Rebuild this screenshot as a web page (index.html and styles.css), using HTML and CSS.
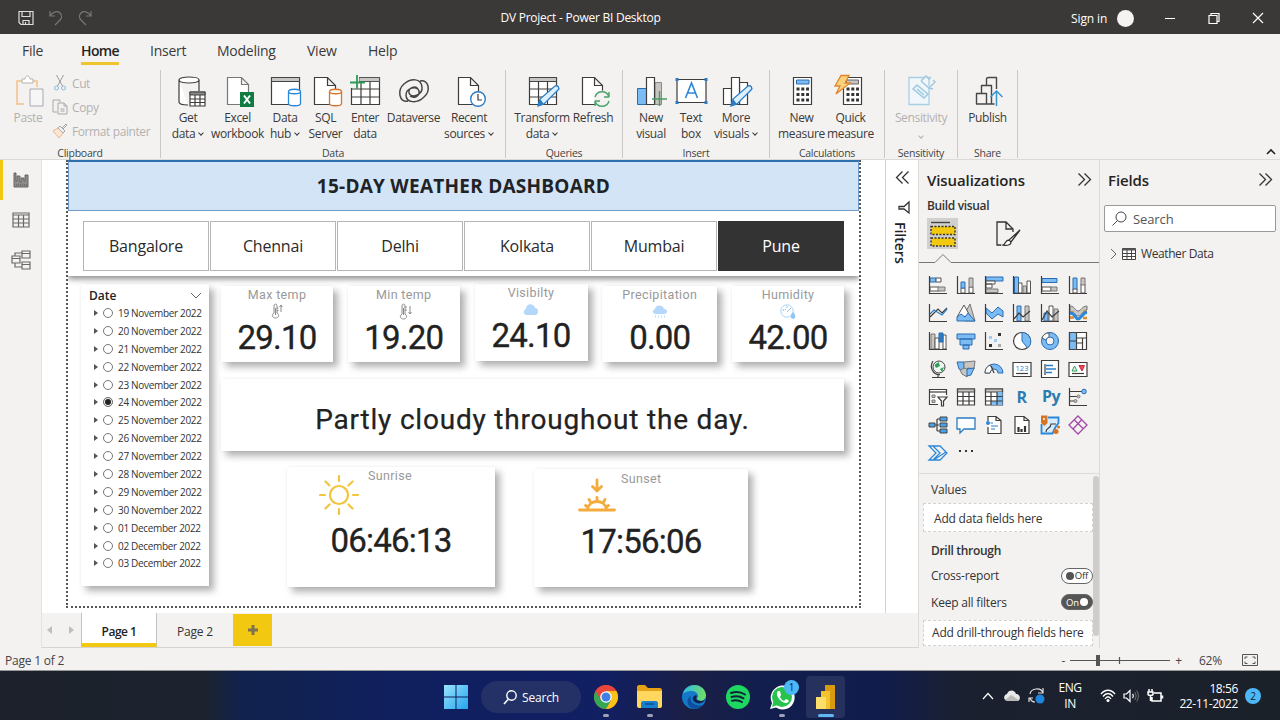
FILE: index.html
```html
<!DOCTYPE html>
<html lang="en">
<head>
<meta charset="utf-8">
<title>DV Project - Power BI Desktop</title>
<link rel="stylesheet" href="styles.css">
</head>
<body>
<header class="titlebar">
  <div class="quick">
    <svg width="16" height="16" viewBox="0 0 16 16" class="ln light"><path d="M1 1.500h14v13H3l-2-2zM4 1.500v5h8v-5M5 14.500v-4h6v4M7.500 12v2"/></svg>
    <svg width="14" height="16" viewBox="0 0 14 16" class="ln dim"><path d="M1 1v5h5M1 6c3-5 8-5 10-3s2 5 0 7l-5 5"/></svg>
    <svg width="14" height="16" viewBox="0 0 14 16" class="ln dim"><path d="M13 1v5H8M13 6C10 1 5 1 3 3s-2 5 0 7l5 5"/></svg>
  </div>
  <div class="wtitle">DV Project - Power BI Desktop</div>
  <div class="winctl">
    <span class="signin">Sign in</span><i class="avatar"></i>
    <svg width="12" height="12" viewBox="0 0 12 12" class="ln white c1"><path d="M1 6.500h10"/></svg>
    <svg width="12" height="12" viewBox="0 0 12 12" class="ln white c2"><path d="M1 3.500h8v8H1zM3 3.500V1.500h8v8H9" stroke-width="1.200"/></svg>
    <svg width="12" height="12" viewBox="0 0 12 12" class="ln white c3"><path d="M1 1l10 10M11 1L1 11" stroke-width="1.200"/></svg>
  </div>
</header>

<nav class="tabs">
  <span class="t-file">File</span><span class="t-home on">Home</span><span class="t-ins">Insert</span><span class="t-mod">Modeling</span><span class="t-view">View</span><span class="t-help">Help</span>
</nav>

<section class="ribbon">
  <div class="group g-clip">
    <div class="row">
      <div class="rb off b-paste"><svg viewBox="0 0 32 32" class="ic"><path d="M12 28H5V5h5M20 5h5v6" fill="none" stroke="#f3c08a" stroke-width="1.500"/><path d="M10 7V3h3c0-4 5-4 5 0h3v4z" fill="#fff" stroke="#b5b3b1"/><path d="M18 13h13v17H18z" fill="#f6f6f6" stroke="#a9a7b0"/></svg><span>Paste</span></div>
      <div class="mini off">
        <div><svg width="16" height="16" viewBox="0 0 16 16" class="ln"><path d="M4.500 0l6 11M11.500 0L5.500 11" stroke="#9b9b9b"/><circle cx="4.500" cy="13" r="2" stroke="#86bcd8"/><circle cx="11.500" cy="13" r="2" stroke="#86bcd8"/></svg><span>Cut</span></div>
        <div><svg width="16" height="16" viewBox="0 0 16 16" class="ln"><path d="M5 13H1V1h7v2M6 4h6l3 3v8H6zM12 4v3h3M8.500 10h4M8.500 12h4" stroke="#aaa8a6"/></svg><span>Copy</span></div>
        <div><svg width="16" height="16" viewBox="0 0 16 16" class="ln"><path d="M1 8l5-3 5 5-4 5z" stroke="#efb58a" fill="#fbe7d6"/><path d="M6 5l2-2 5 5-2 2zM10 5l4-4 1 1-4 4" stroke="#a8a6a4"/></svg><span>Format painter</span></div>
      </div>
    </div>
    <div class="gl">Clipboard</div>
  </div>
  <div class="group g-data">
    <div class="row">
      <div class="rb b46"><svg viewBox="0 0 32 32" class="ic"><path d="M7 4v22c0 2 3 3 9 3M27 4v11M7 4c0-4 20-4 20 0s-20 4-20 0" class="k w"/><path d="M18 16h15v14H18z" class="k w"/><path d="M18 16h15v3H18z" fill="#888" stroke="#444"/><path d="M18 23h15M18 26.500h15M23 19v11M28 19v11" class="k"/></svg><span>Get</span><span>data<b></b></span></div>
      <div class="rb b53"><svg viewBox="0 0 32 32" class="ic"><path d="M5.500 1.500h14l7 7V28.500h-21zM19.500 1.500v7h7" class="k w gy"/><path d="M18 16h14v15H18z" fill="#107c41"/><path d="M22 19.500l6 8M28 19.500l-6 8" stroke="#fff" stroke-width="2"/></svg><span>Excel</span><span>workbook</span></div>
      <div class="rb b42"><svg viewBox="0 0 32 32" class="ic"><path d="M2.500 1.500h28v27h-28z" class="k w"/><path d="M2.500 1.500h28v4h-28z" fill="#c8c6c4" stroke="#444"/><path d="M19.500 15.500v12c0 3 12 3 12 0v-12c0-3-12-3-12 0c0 3 12 3 12 0" fill="#fff" stroke="#2b88d8" stroke-width="1.300"/></svg><span>Data</span><span>hub<b></b></span></div>
      <div class="rb b39"><svg viewBox="0 0 32 32" class="ic"><path d="M4.500 1.500h13l8 8v19h-21zM17.500 1.500v8h8" class="k w"/><path d="M19.500 15.500v12c0 3 12 3 12 0v-12c0-3-12-3-12 0c0 3 12 3 12 0" fill="#fff" stroke="#d9742b" stroke-width="1.300"/></svg><span>SQL</span><span>Server</span></div>
      <div class="rb b40"><svg viewBox="0 0 32 32" class="ic"><path d="M2.500 1.500h28v27h-28z" class="k w"/><path d="M10 1.500h20.500v4H10z" fill="#c8c6c4" stroke="#555"/><path d="M2.500 13h28M2.500 21h28M12 5.500v23M21 5.500v23" class="k"/><path d="M0 0h10v12H0z" fill="#f3f2f1"/><path d="M1 6.500h15M8 -1v14" stroke="#2e9b57" stroke-width="1.800"/></svg><span>Enter</span><span>data</span></div>
      <div class="rb b57"><svg viewBox="0 0 32 32" class="ic"><path d="M10 25C1 27-1 14 6 8c7-6 17-6 18 3 1 8-11 12-13 6-1-5 6-8 9-4M22 5c9-2 11 10 4 16-7 7-18 6-18-2C8 12 19 9 21 15c1 5-5 8-9 5" fill="none" stroke="#484644" stroke-width="1.500"/></svg><span>Dataverse</span></div>
      <div class="rb b54"><svg viewBox="0 0 32 32" class="ic"><path d="M5.500 1.500h12l8 8v19h-20zM17.500 1.500v8h8" class="k w"/><circle cx="25" cy="23" r="7.300" fill="#fff" stroke="#2b7cc4" stroke-width="1.400"/><path d="M25 18v6h4" class="k"/></svg><span>Recent</span><span>sources<b></b></span></div>
    </div>
    <div class="gl">Data</div>
  </div>
  <div class="group g-q">
    <div class="row">
      <div class="rb b54"><svg viewBox="0 0 32 32" class="ic"><path d="M3.500 1.500h27v27h-27z" class="k w"/><path d="M3.500 1.500h27v4h-27z" fill="#c8c6c4" stroke="#444"/><path d="M3.500 13h27M3.500 21h27M12.500 5.500v23M21.500 5.500v23" class="k"/><path d="M12 30l2-7 15-13c3-1 5 2 3 4L18 28z" fill="#dcf0ff" stroke="#2b7cc4" stroke-width="1.300"/><path d="M12 30l2-7 4 5z" fill="#2b7cc4"/></svg><span>Transform</span><span>data<b></b></span></div>
      <div class="rb b48"><svg viewBox="0 0 32 32" class="ic"><path d="M5.500 1.500h12l8 8v19h-20zM17.500 1.500v8h8" class="k w"/><circle cx="25" cy="23" r="8.500" fill="#f3f2f1"/><path d="M18 21c2-7 12-7 14 0v-5M32 21h-5M32 25c-2 7-12 7-14 0v5M18 25h5" fill="none" stroke="#4ba36b" stroke-width="1.400"/></svg><span>Refresh</span></div>
    </div>
    <div class="gl">Queries</div>
  </div>
  <div class="group g-ins">
    <div class="row">
      <div class="rb b40"><svg viewBox="0 0 32 32" class="ic"><path d="M2.500 12.500h9v16h-9z" fill="#7cbcf5" stroke="#2b6cb0"/><path d="M20 6.500h6.500v22H20z" fill="#c8c6c4" stroke="#888"/><path d="M11.500 1.500h8v27h-8z" class="k w"/><path d="M17 23h15M24.500 15v15" stroke="#4b9a62" stroke-width="1.500"/></svg><span>New</span><span>visual</span></div>
      <div class="rb b40"><svg viewBox="0 0 32 32" class="ic"><path d="M2 3.500h29v23H2z" class="k w"/><path d="M10.500 22L16.500 7l6 15M12.500 17h8" fill="none" stroke="#2b88d8" stroke-width="1.600"/><path d="M.500 2h3v3h-3zM29.500 2h3v3h-3zM.500 25h3v3h-3zM29.500 25h3v3h-3z" fill="#2b7cc4"/></svg><span>Text</span><span>box</span></div>
      <div class="rb b50"><svg viewBox="0 0 32 32" class="ic"><path d="M3.500 12.500h8v16h-8zM19.500 6.500h8v22h-8z" class="k w"/><path d="M11.500 1.500h8v27h-8z" class="k w"/><path d="M11 30l2-7 15-13c3-1 5 2 3 4L17 28z" fill="#dcf0ff" stroke="#2b7cc4" stroke-width="1.300"/><path d="M11 30l2-7 4 5z" fill="#2b7cc4"/></svg><span>More</span><span>visuals<b></b></span></div>
    </div>
    <div class="gl">Insert</div>
  </div>
  <div class="group g-calc">
    <div class="row">
      <div class="rb b49"><svg viewBox="0 0 32 32" class="ic"><path d="M7.500 1.500h18v27h-18z" class="k w"/><path d="M10.500 4h12.500v4H10.500z" fill="#7cbcf5" stroke="#2b6cb0"/><path d="M10.500 13h12.500M10.500 18.500h12.500M10.500 24h12.500" stroke="#333" stroke-width="3" stroke-dasharray="3 1.800"/></svg><span>New</span><span>measure</span></div>
      <div class="rb b49"><svg viewBox="0 0 32 32" class="ic"><path d="M8.500 1.500h18v27h-18z" class="k w"/><path d="M11.500 4h12v4h-12z" fill="#c8c6c4" stroke="#666"/><path d="M11.500 13h12.500M11.500 18.500h12.500M11.500 24h12.500" stroke="#333" stroke-width="3" stroke-dasharray="3 1.800"/><path d="M6-.500h8L10 7h5L1 18l4-8H0z" fill="#fbd27c" stroke="#e0862c" stroke-width="1.300"/></svg><span>Quick</span><span>measure</span></div>
    </div>
    <div class="gl">Calculations</div>
  </div>
  <div class="group g-sens">
    <div class="row">
      <div class="rb off b72"><svg viewBox="0 0 32 32" class="ic"><path d="M4 1.500h20v27H4z" fill="#f0f6fa" stroke="#a9cfe4" stroke-width="1.300"/><path d="M8 13l4-4 11 9-4 4zM12 13l7 6M16 5l5-5 3 3 2-2M24 12l6-6-2-2M16 5l8 7 4 1" fill="#eaf4fa" stroke="#9cc8e0" stroke-width="1.400"/></svg><span>Sensitivity</span><span><b class="solo"></b></span></div>
    </div>
    <div class="gl">Sensitivity</div>
  </div>
  <div class="group g-share">
    <div class="row">
      <div class="rb b59"><svg viewBox="0 0 32 32" class="ic"><path d="M4.500 17.500h10v10.500h-10zM9.500 17V9.500h10V28h-5M14.500 9V3c0-1 1-1.500 2-1.500h8V13M19.500 28h3" fill="none" stroke="#484644" stroke-width="1.400" stroke-linejoin="round"/><path d="M24.500 30V15M18.500 21l6-6 6 6" fill="none" stroke="#3a96cc" stroke-width="1.500"/></svg><span>Publish</span></div>
    </div>
    <div class="gl">Share</div>
  </div>
  <div class="collapse"><svg width="10" height="6" viewBox="0 0 10 6"><path d="M1 5l4-4 4 4" fill="none" stroke="#222" stroke-width="1.600"/></svg></div>
</section>

<main class="main">
  <aside class="rail">
    <div class="r on"><svg width="16" height="16" viewBox="0 0 16 16"><path d="M1 1v14h14V3h-3v6h-1V6H8v4H7V4H4v5H3V1z" fill="#8d8b89" stroke="#666"/><path d="M3 13h11" stroke="#555" stroke-dasharray="1 1"/></svg></div>
    <div class="r"><svg width="18" height="16" viewBox="0 0 18 16"><path d="M1 1h16v14H1zM1 3h16M1 7h16M1 11h16M6.500 3v12M11.500 3v12" class="ln" stroke="#6b6967" stroke-width="1.200"/></svg></div>
    <div class="r"><svg width="20" height="20" viewBox="0 0 20 20"><path d="M1 6h8v7H1zM11 1h8v7h-8zM11 12h8v7h-8zM1 8.500h8M11 3.500h8M11 14.500h8M4 6V3h7M4 13v4h7" class="ln" stroke="#6b6967" stroke-width="1.200"/></svg></div>
  </aside>

  <div class="center">
    <div class="upper">
      <div class="stage">
        <div class="page">
          <h1>15-DAY WEATHER DASHBOARD</h1>
          <div class="cities"><span>Bangalore</span><span>Chennai</span><span>Delhi</span><span>Kolkata</span><span>Mumbai</span><span class="sel">Pune</span></div>
          <div class="board">
            <div class="dates card">
              <div class="dh"><span>Date</span><svg width="12" height="7" viewBox="0 0 12 7"><path d="M1 1l5 5 5-5" class="ln" stroke="#666"/></svg></div>
              <ul>
                <li><i></i><u></u>19 November 2022</li><li><i></i><u></u>20 November 2022</li><li><i></i><u></u>21 November 2022</li><li><i></i><u></u>22 November 2022</li><li><i></i><u></u>23 November 2022</li><li><i></i><u class="sel"></u>24 November 2022</li><li><i></i><u></u>25 November 2022</li><li><i></i><u></u>26 November 2022</li><li><i></i><u></u>27 November 2022</li><li><i></i><u></u>28 November 2022</li><li><i></i><u></u>29 November 2022</li><li><i></i><u></u>30 November 2022</li><li><i></i><u></u>01 December 2022</li><li><i></i><u></u>02 December 2022</li><li><i></i><u></u>03 December 2022</li>
              </ul>
            </div>
            <div class="right">
              <div class="kpis">
                <div class="card kpi"><h3>Max temp</h3><svg width="16" height="17" viewBox="0 0 16 17"><path d="M5 10V3c0-2.500 3-2.500 3 0v7c3 2 1.500 5-1.500 5s-4.500-3-1.500-5zM6.500 5v7M8 5h1.500M8 7.500h1.500M12 9V2M10.500 4L12 2l1.500 2" class="ln" stroke="#8a8a8a"/></svg><strong>29.10</strong></div>
                <div class="card kpi"><h3>Min temp</h3><svg width="16" height="17" viewBox="0 0 16 17"><path d="M6 11V3c0-2.500 3-2.500 3 0v8c3 2 1.500 5-1.500 5S3 13 6 11zM7.500 5v7M9 4h2M9 7h2M14 3v8M12.500 9l1.500 2 1.500-2" class="ln" stroke="#8a8a8a"/></svg><strong>19.20</strong></div>
                <div class="card kpi vis"><h3>Visibilty</h3><svg width="16" height="17" viewBox="0 0 16 17"><path d="M4 14c-4 0-4-5-1-6 0-6 8-6 9-1 4 0 4 7 0 7z" fill="#b3d8fb"/></svg><strong>24.10</strong></div>
                <div class="card kpi pre"><h3>Precipitation</h3><svg width="16" height="17" viewBox="0 0 16 17"><path d="M4 11c-4 0-4-4-1-5 1-5 8-4 9 0 4 0 4 5 0 5z" fill="#b3d8fb"/><path d="M3 13.500h11" stroke="#b3d8fb" stroke-width="2" stroke-dasharray="1 2"/></svg><strong>0.00</strong></div>
                <div class="card kpi"><h3>Humidity</h3><svg width="16" height="17" viewBox="0 0 16 17"><circle cx="7" cy="8" r="6.200" fill="#fff" stroke="#a9d3fa"/><path d="M3 8l1-2M7 3v2M11 5L7 9M6 7l-1-1" stroke="#8fc3f2"/><path d="M13 9c4 4 2 7 0 7s-4-3 0-7z" fill="#8fc6f7"/></svg><strong>42.00</strong></div>
              </div>
              <div class="card summary">Partly cloudy throughout the day.</div>
              <div class="suns">
                <div class="card sun rise">
                  <div class="sh"><svg width="40" height="40" viewBox="0 0 40 40"><g fill="none" stroke="#f2c53d" stroke-width="2.200" stroke-linecap="round"><circle cx="20" cy="20" r="9"/><path d="M20 1v5M20 34v5M1 20h5M34 20h5M6.500 6.500l4 4M29.500 29.500l4 4M33.500 6.500l-4 4M10.500 29.500l-4 4"/></g></svg><h3>Sunrise</h3></div>
                  <strong>06:46:13</strong>
                </div>
                <div class="card sun set">
                  <div class="sh"><svg width="38" height="34" viewBox="0 0 38 34"><g fill="none" stroke="#f3ab3c" stroke-width="2.800" stroke-linecap="round" stroke-linejoin="round"><path d="M19 2v10M14.500 8.500l4.500 4.500 4.500-4.500M1.500 32h35M9.500 31c2-10 17-10 19 0M19 22v-2.500M12.500 24l-1.500-2.500M25.500 24l1.500-2.500M9 28.500l-1.500-1M29 28.500l1.500-1"/></g></svg><h3>Sunset</h3></div>
                  <strong>17:56:06</strong>
                </div>
              </div>
            </div>
          </div>
        </div>
      </div>
      <aside class="filters">
        <svg width="13" height="13" viewBox="0 0 13 13"><path d="M6.500 .500l-6 6 6 6M12.500 .500l-6 6 6 6" class="ln" stroke="#333" stroke-width="1.300"/></svg>
        <svg class="fun" width="12" height="13" viewBox="0 0 12 13"><path d="M11 1v11L6 8H1V5.500h5z" class="ln" stroke="#333" stroke-width="1.300"/></svg>
        <span>Filters</span>
      </aside>
    </div>
    <div class="pagetabs">
      <svg width="5" height="8" viewBox="0 0 5 8"><path d="M5 0v8L0 4z" fill="#c0bebc"/></svg>
      <svg width="5" height="8" viewBox="0 0 5 8"><path d="M0 0v8l5-4z" fill="#c0bebc"/></svg>
      <span class="pt on">Page 1</span><span class="pt">Page 2</span><span class="plus"><svg width="12" height="12" viewBox="0 0 12 12"><path d="M6 1v10M1 6h10" stroke="#7d7350" stroke-width="3"/></svg></span>
    </div>
  </div>

  <aside class="viz">
    <div class="ph"><h2>Visualizations</h2><svg width="13" height="13" viewBox="0 0 13 13"><path d="M.500 .500l6 6-6 6M6.500 .500l6 6-6 6" class="ln" stroke="#333" stroke-width="1.300"/></svg></div>
    <div class="bv">Build visual</div>
    <div class="modes">
      <span class="m on"><svg width="26" height="26" viewBox="0 0 26 26"><path d="M1 1.500h19" stroke="#444" stroke-width="1.400"/><path d="M1 5.500h24v8H1zM1 17h24v8H1z" fill="#f2c811" stroke="#333" stroke-width="1.400" stroke-dasharray="2 1.500"/></svg></span>
      <span class="m"><svg width="26" height="26" viewBox="0 0 26 26"><path d="M6 24H2V1h9l7 7v3M11 1v7h7" class="ln" stroke="#333" stroke-width="1.300"/><path d="M25 9L14 19l2 2zM14 19c-4 0-3 4-6 5 4 1 8 0 8-3" fill="#fff" stroke="#333" stroke-width="1.300"/></svg></span>
    </div>
    <svg class="notch" width="180" height="10" viewBox="0 0 180 10"><path d="M0 9.500h16l8-8 8 8h148" class="ln" stroke="#777"/></svg>
    <div class="icons">
      <svg viewBox="0 0 20 20"><path d="M2 3h6v4H2z" class="b"/><path d="M8 3h5v4H8z" class="w"/><path d="M2 12h9v4H2z" class="w"/><path d="M10 12h7v4h-7z" class="g"/><path d="M1.500 1v17.500H19" class="k"/></svg>
      <svg viewBox="0 0 20 20"><path d="M5 13h4v5H5z" class="w"/><path d="M5 7h4v6H5z" class="b"/><path d="M13 12h4v6h-4z" class="w"/><path d="M13 3h4v9h-4z" class="g"/><path d="M1.500 1v17.500H19" class="k"/></svg>
      <svg viewBox="0 0 20 20"><path d="M2 2h17v4H2z" class="b"/><path d="M2 6h9v3H2zM2 9h6v4H2z" class="w"/><path d="M2 14h12v3.500H2z" class="g"/><path d="M1.500 1v17.500H19" class="k"/></svg>
      <svg viewBox="0 0 20 20"><path d="M2.500 2h4v16h-4z" class="b"/><path d="M6.500 8h3.500v10H6.500z" class="w"/><path d="M11 11h3.500v7H11z" class="g"/><path d="M15 6h3.500v12H15z" class="w"/><path d="M1.500 1v17.500H19" class="k"/></svg>
      <svg viewBox="0 0 20 20"><path d="M2 3.500h15v4H2z" class="b"/><path d="M2 12h9v4H2z" class="w"/><path d="M11 12h6v4h-6z" class="g"/><path d="M1.500 1v17.500H19" class="k"/></svg>
      <svg viewBox="0 0 20 20"><path d="M5 3h4v12H5z" class="b"/><path d="M5 14h4v4H5zM13 9h4v9h-4z" class="w"/><path d="M13 3h4v7h-4z" class="g"/><path d="M1.500 1v17.500H19" class="k"/></svg>

      <svg viewBox="0 0 20 20"><path d="M2 14l8-8 4 4 5-5" class="k"/><path d="M2 11l4-4 8 5 5-6" class="bl"/><path d="M1.500 1v17.500H19" class="k"/></svg>
      <svg viewBox="0 0 20 20"><path d="M9 10l5-9 5 17H9z" class="g"/><path d="M1 14L8 2l6 11z" class="w"/><path d="M1 18v-4l4-3 4 3 3-4 7 8z" class="b"/></svg>
      <svg viewBox="0 0 20 20"><path d="M2 5l6 5 6-6 5 4v6l-5-3-6 5-6-6z" class="b"/><path d="M1.500 1v17.500H19" class="k"/></svg>
      <svg viewBox="0 0 20 20"><path d="M5 3h4v15H5z" class="b"/><path d="M13 3h4v15h-4z" class="g"/><path d="M2 16l5-6 4 4 7-6" class="k"/><path d="M1.500 1v17.500H19" class="k"/></svg>
      <svg viewBox="0 0 20 20"><path d="M4 10h4v8H4z" class="b"/><path d="M9 3h4v15H9z" class="w"/><path d="M14 6h4v12h-4z" class="g"/><path d="M2 17l5-9 5 6 7-6" class="k"/><path d="M1.500 1v17.500H19" class="k"/></svg>
      <svg viewBox="0 0 20 20"><path d="M2 3c5 0 5 5 8 5s4-5 9-5v4c-4 0-5 6-9 6S7 9 2 9z" class="g"/><path d="M2 9.500h4M15 8.500h4M2 14.500h4M15 15h4" fill="none" stroke="#e08a2b" stroke-width="2.500"/><path d="M2 10c6 0 5 6 8 6s4-6 9-7" fill="none" stroke="#2b88d8" stroke-width="3"/><path d="M1.500 1v17.500H19" class="k"/></svg>

      <svg viewBox="0 0 20 20"><path d="M3 3h4v15H3z" class="g"/><path d="M7 7h4v11H7zM15 4h3v14h-3z" class="w"/><path d="M11 2h4v9h-4z" fill="#2b7cc4" stroke="#2b6cb0"/><path d="M1.500 1v17.500H19" class="k"/></svg>
      <svg viewBox="0 0 20 20"><path d="M1 3h18v5H1zM4 8h12v6H4zM7 14h6v4H7z" class="b"/></svg>
      <svg viewBox="0 0 20 20"><path d="M1.500 1v17.500H19" class="k"/><path d="M5 13h3v3H5zM14 2h3v3h-3z" fill="#333"/><path d="M5 5h3v3H5zM10 8h3v3h-3z" fill="#9ecbf4"/><path d="M14 13h3v3h-3z" fill="#aaa"/></svg>
      <svg viewBox="0 0 20 20"><circle cx="10" cy="10" r="8.500" class="w k"/><path d="M10 1.500V10l5.500 7C22 12 18 1.500 10 1.500z" class="b"/></svg>
      <svg viewBox="0 0 20 20"><circle cx="10" cy="10" r="8.500" class="b"/><path d="M2 7l4 2 3-3V2C5 2 3 4 2 7z" class="w"/><circle cx="10" cy="10" r="4" fill="#f3f2f1" stroke="#2b6cb0"/></svg>
      <svg viewBox="0 0 20 20"><path d="M1.500 1.500h17v17h-17z" class="w k"/><path d="M1.500 1.500h7v17h-7z" class="b k"/><path d="M8.500 7h10M8.500 12h6M14.500 7v11.500M1.500 10h7" class="k"/></svg>

      <svg viewBox="0 0 20 20"><circle cx="11" cy="8" r="6" fill="#eef7f0" stroke="#444"/><path d="M6.500 6l4-3 1.500 4-4 2zM12 10l4-2-2 5z" fill="#2f9e5b"/><path d="M5 2C1 8 5 16 12 15.500M10 15v3M4 18.500h13" class="k"/></svg>
      <svg viewBox="0 0 20 20"><path d="M1 3h7v9L3 10z" class="b"/><path d="M8 3l11-1-1 8-6-1-4 3z" class="g"/><path d="M4 11l5-2 3 2-1 7-5-3z" class="g"/><path d="M11 10l7-1-3 7-4 1z" class="b"/></svg>
      <svg viewBox="0 0 20 20"><path d="M1 14a9 9 0 0 1 18 0h-5a4 4 0 0 0-8 0z" class="b"/><path d="M1 14a9 9 0 0 1 5-8l3 4a5 5 0 0 0-3 4z" class="w"/><path d="M10 14L7 7" class="k"/></svg>
      <svg viewBox="0 0 20 20"><path d="M1 3.500h18v14H1z" class="w k"/><text x="10" y="12" class="n123">123</text><path d="M4 14.500h12" class="k"/></svg>
      <svg viewBox="0 0 20 20"><path d="M1.500 1.500h17v17h-17z" class="w k"/><path d="M5 5v11" class="k"/><path d="M6 6.500h7M6 10h10M6 13.500h6" stroke="#2b7cc4" stroke-width="1.600"/></svg>
      <svg viewBox="0 0 20 20"><path d="M1 3.500h18v14H1z" class="w k"/><path d="M4 12h5L6.500 7z" fill="#dff2e4" stroke="#2f9e5b"/><path d="M11 6.500h5.500L14 12z" fill="#e8485a" stroke="#c42b3c"/><path d="M4 14.500h12" class="k"/></svg>

      <svg viewBox="0 0 20 20"><path d="M10 17.500H1.500v-15h17V8" class="w k"/><path d="M1.500 5h17" class="k"/><path d="M4 8h3v2.500H4zM4 13h3v2.500H4z" class="g"/><path d="M10 10h9l-3.500 4v5h-2v-5z" class="w k"/></svg>
      <svg viewBox="0 0 20 20"><path d="M1.500 2h17v16h-17z" class="w k"/><path d="M1.500 2h17v3h-17z" class="g k"/><path d="M1.500 9.500h17M1.500 14h17M7 5v13M13 5v13" class="k"/></svg>
      <svg viewBox="0 0 20 20"><path d="M1.500 2h17v16h-17z" class="w k"/><path d="M1.500 2h17v3h-17z" class="g k"/><path d="M13 5h5.500v13H7v-4h6z" fill="#7cbcf5"/><path d="M1.500 9.500h17M1.500 14h17M7 5v13M13 5v13" class="k"/></svg>
      <svg viewBox="0 0 20 20"><text x="9.500" y="15.500" class="rpy">R</text></svg>
      <svg viewBox="0 0 20 20"><text x="11" y="14.500" class="rpy">Py</text></svg>
      <svg viewBox="0 0 20 20"><path d="M1.500 1v17.500H19M2 4.500h12M2 9.500h7M2 14h4" class="k"/><circle cx="16" cy="4.500" r="2.300" class="b"/><circle cx="10.500" cy="9.500" r="1.500" class="g"/><circle cx="7.500" cy="14" r="1.500" class="g"/></svg>

      <svg viewBox="0 0 20 20"><path d="M6 10h5M9 4v12M9 4h3M9 16h3" class="k"/><path d="M1 8h6v4H1zM12 2h7v4h-7zM12 8h7v4h-7zM12 14h7v4h-7z" fill="#4ba0e8" stroke="#444"/></svg>
      <svg viewBox="0 0 20 20"><path d="M1 3h18v11H8l-4 4v-4H1z" fill="#fff" stroke="#2b7cc4" stroke-width="1.300"/></svg>
      <svg viewBox="0 0 20 20"><path d="M4 6V1.500h8l5 4v13H4V12M12 1.500v4h5" class="w k"/><circle cx="4" cy="8" r="2" fill="#2b88d8"/><path d="M6.500 8H9M7 11h7M7 14h4" class="bl"/></svg>
      <svg viewBox="0 0 20 20"><path d="M3 1.500h9l5 4v13H3zM12 1.500v4h5" class="w k"/><path d="M6.500 17v-5M9.500 17v-3M13 17v-6" stroke="#333" stroke-width="2.200"/></svg>
      <svg viewBox="0 0 20 20"><path d="M8 2.500h10.500V8l-3 4-3 6.500h-11V9" fill="#d9ecfb" stroke="#2b88d8" stroke-width="1.800"/><path d="M6 17c0-5 5-3 5-8h5" class="k"/><path d="M1 .500h6.500v7.500l-3 3-3.500-3z" fill="#d9731f"/><path d="M4 3v2" stroke="#fff" stroke-width="1.500"/><circle cx="16" cy="16.500" r="2.500" fill="#d9731f"/><circle cx="18.500" cy="12" r="1.500" fill="#d9731f"/></svg>
      <svg viewBox="0 0 20 20"><path d="M10 1l9 9-9 9-9-9zM6.500 5L15 13.500M13.500 5L5 14" fill="none" stroke="#a349a8" stroke-width="1.300"/></svg>

      <svg viewBox="0 0 20 20"><path d="M1 3h11l7 7-7 7H1l7-7zM5 3l7 7-7 7M7 16l11-7" fill="none" stroke="#2b88d8" stroke-width="1.300"/></svg>
      <svg viewBox="0 0 20 20"><path d="M3 8h2M9 8h2M15 8h2" stroke="#333" stroke-width="2"/></svg>
    </div>
    <div class="wells">
      <div class="wl">Values</div>
      <div class="well">Add data fields here</div>
      <div class="wl dt">Drill through</div>
      <div class="tg"><span>Cross-report</span><em class="offt"><i></i>Off</em></div>
      <div class="tg t2"><span>Keep all filters</span><em class="ont">On<i></i></em></div>
      <div class="well w2">Add drill-through fields here</div>
      <div class="scroll"></div>
    </div>
  </aside>

  <aside class="fields">
    <div class="ph"><h2>Fields</h2><svg width="13" height="13" viewBox="0 0 13 13"><path d="M.500 .500l6 6-6 6M6.500 .500l6 6-6 6" class="ln" stroke="#333" stroke-width="1.300"/></svg></div>
    <div class="search"><svg width="15" height="15" viewBox="0 0 15 15"><circle cx="9" cy="6" r="5" class="ln" stroke="#444"/><path d="M5.500 9.500L.500 14.500" stroke="#444"/></svg><span>Search</span></div>
    <div class="tree"><svg width="7" height="12" viewBox="0 0 7 12"><path d="M1 1l5 5-5 5" class="ln" stroke="#666"/></svg><svg width="14" height="12" viewBox="0 0 14 12"><path d="M.500 .500h13v11H.500z" fill="#fff" stroke="#444"/><path d="M.500 .500h13v2H.500z" fill="#555"/><path d="M.500 5.500h13M.500 8.500h13M5 2v10M9.500 2v10" stroke="#444"/></svg><span>Weather Data</span></div>
  </aside>
</main>

<footer class="status">
  <span>Page 1 of 2</span>
  <div class="zoom"><span>-</span><svg width="100" height="12" viewBox="0 0 100 12"><path d="M0 6.500h100M49.500 3v7" stroke="#555" stroke-width="1.200"/><path d="M26 1h4v11h-4z" fill="#555"/></svg><span>+</span><span class="pct">62%</span><svg width="16" height="12" viewBox="0 0 16 12"><path d="M.500 .500h15v11H.500zM3 5V3h2.500M13 5V3h-2.500M3 7.500V9.500h2.500M13 7.500V9.500h-2.500" class="ln" stroke="#555"/></svg></div>
</footer>

<div class="taskbar">
  <div class="apps">
    <svg width="24" height="24" viewBox="0 0 24 24"><defs><linearGradient id="win" x1="0" y1="0" x2="1" y2="1"><stop offset="0" stop-color="#9be4fd"/><stop offset="1" stop-color="#22a4ee"/></linearGradient></defs><path d="M0 0h11.500v11.500H0zM12.500 0H24v11.500H12.500zM0 12.500h11.500V24H0zM12.500 12.500H24V24H12.500z" fill="url(#win)"/></svg>
    <div class="tsearch"><svg width="14" height="15" viewBox="0 0 14 15"><circle cx="8.500" cy="5.500" r="4.700" fill="none" stroke="#fff" stroke-width="1.400"/><path d="M5 9.500L1 14" stroke="#fff" stroke-width="1.600"/></svg><span>Search</span></div>
    <div class="app run"><svg width="24" height="24" viewBox="0 0 24 24"><circle cx="12" cy="12" r="12" fill="#e8453c"/><path d="M1.600 6A12 12 0 0 0 12 24l5.200-9L6.800 15z" fill="#34a853"/><path d="M22.400 6A12 12 0 0 1 12 24l5.200-9L12 6z" fill="#fbc116"/><path d="M1.600 6A12 12 0 0 1 22.400 6H12z" fill="#e8453c"/><circle cx="12" cy="12" r="5.800" fill="#fff"/><circle cx="12" cy="12" r="4.500" fill="#3f7fe8"/></svg></div>
    <div class="app run"><svg width="25" height="24" viewBox="0 0 25 24"><path d="M0 2c0-1 1-2 2-2h6l3 3h12c1 0 2 1 2 2v3H0z" fill="#e6a117"/><path d="M0 6h25v15c0 1-1 2-2 2H2c-1 0-2-1-2-2z" fill="#ffd75e"/><path d="M4 23v-5c0-1 1-2 2-2h13c1 0 2 1 2 2v5z" fill="#1a7fd0"/><path d="M8 19h9" stroke="#0b4f91" stroke-width="1.500"/></svg></div>
    <div class="app"><svg width="24" height="24" viewBox="0 0 24 24"><defs><linearGradient id="edg" x1="0" y1="0" x2="1" y2=".2"><stop offset="0" stop-color="#2eb6ea"/><stop offset="1" stop-color="#6cdc6a"/></linearGradient></defs><circle cx="12" cy="12" r="12" fill="#1479c9"/><path d="M1 9C4-3 22-3 24 10c0 5-5 7-8 5-2-2 0-2 0-4 0-5-9-7-15-2z" fill="url(#edg)"/><path d="M9 11c-2 6 4 11 12 9-3 4-9 5-13 2-4-4-3-9 1-11z" fill="#0d4f9c"/><path d="M14 10c2 2-1 3 1 5 3 2 7 1 8-1-1 4-6 6-10 3s-2-6 1-7z" fill="#11204f"/></svg></div>
    <div class="app"><svg width="24" height="24" viewBox="0 0 24 24"><circle cx="12" cy="12" r="12" fill="#1ed760"/><path d="M5 8c5-1.500 10-1 14 1.500M5.500 12c4.500-1.300 8.500-.800 12 1.300M6 15.800c3.500-1 7-.600 10 1.200" fill="none" stroke="#10223a" stroke-width="2" stroke-linecap="round"/></svg></div>
    <div class="app run"><svg width="24" height="24" viewBox="0 0 24 24"><path d="M0 24l2-6A12 12 0 1 1 6 22.500z" fill="#fff"/><circle cx="12" cy="12" r="10" fill="#28c34c"/><path d="M2 22l1.500-6 4 4z" fill="#28c34c"/><path d="M8 6c-4 4 4 13 9 12 3-2 2-3-1-4l-2 2c-2-1-3-2-4-4l1-2-1-4z" fill="#fff"/></svg><b class="badge">1</b></div>
    <div class="app act"><svg width="20" height="24" viewBox="0 0 20 24"><path d="M9 1c0-1 0-1 1-1h8c1 0 1 0 1 1v22c0 1 0 1-1 1H9z" fill="#d99a10"/><path d="M5 7c0-1 0-1 1-1h8v18H5z" fill="#f2c32c"/><path d="M0 13c0-1 0-1 1-1h9v12H1c-1 0-1 0-1-1z" fill="#fbdf6b"/></svg></div>
  </div>
  <div class="tray">
    <svg width="12" height="8" viewBox="0 0 12 8"><path d="M1 7l5-5.500L11 7" class="ln" stroke="#fff" stroke-width="1.200"/></svg>
    <svg class="od" width="16" height="12" viewBox="0 0 16 12"><path d="M4 11c-5 0-5-6-1-7 2-5 8-4 9 0 5 0 5 7 1 7z" fill="#e8e8e8"/><path d="M1 10l6-5 8 5-1 1H3z" fill="#b9b9b9"/></svg>
    <svg class="up" width="17" height="17" viewBox="0 0 17 17"><path d="M2 7c1-6 11-7 13-1M15 1v5h-5M7 15c-2 0-4-1-5-4M1 15v-4h4" class="ln" stroke="#ddd" stroke-width="1.200"/><circle cx="12" cy="12" r="4.500" fill="#1f86dd"/></svg>
    <span class="lang">ENG<br>IN</span>
    <svg class="wifi" width="16" height="14" viewBox="0 0 16 14"><path d="M1 5c4-5 10-5 14 0M3 7.500c3-4 7-4 10 0M5 10c2-3 4-3 6 0" class="ln" stroke="#fff" stroke-width="1.300"/><circle cx="8" cy="11.500" r="1.500" fill="#fff"/></svg>
    <svg class="vol" width="16" height="14" viewBox="0 0 16 14"><path d="M1 5h2.500L7 1.500v11L3.500 9H1zM9.500 5c1 1 1 3 0 4" class="ln" stroke="#fff" stroke-width="1.200"/><path d="M11.500 3c2 2 2 6 0 8M13.500 1.500c2.500 3 2.500 8 0 11" class="ln" stroke="#777"/></svg>
    <svg class="bat" width="17" height="16" viewBox="0 0 17 16"><path d="M7 5h7v8H5V9M15.500 7.500v3M1 4h5v2c0 2-5 2-5 0zM2 4V1M5 4V1M3.500 8v5" class="ln" stroke="#fff" stroke-width="1.500"/></svg>
    <span class="clock">18:56<br>22-11-2022</span>
    <b class="notif">2</b>
  </div>
</div>
</body>
</html>
```
FILE: styles.css
```css
* { box-sizing: border-box; }
body { margin: 0; width: 1280px; height: 720px; overflow: hidden; display: flex; flex-direction: column; background: #f3f2f1; color: #333; font-family: "Open Sans", "Noto Sans", sans-serif; font-size: 12px; }
h1, h2, h3, ul { margin: 0; padding: 0; font-weight: 400; list-style: none; }
svg { display: block; flex: none; overflow: visible; }
.ln { fill: none; }
.light { stroke: #dedede; stroke-width: 1.2; }
.dim { stroke: #7a7876; stroke-width: 1.2; }
.white { stroke: #fff; }

/* Title bar */
.titlebar { height: 34px; flex: none; background: #3b3937; color: #fff; display: grid; grid-template-columns: 430px 301px 549px; align-items: center; }
.quick { display: flex; gap: 15px; padding: 2px 0 0 18px; }
.wtitle { text-align: center; font-size: 12px; letter-spacing: -.25px; padding-top: 1px; }
.winctl { display: flex; align-items: center; padding-left: 340px; padding-top: 2px; }
.signin { width: 46px; letter-spacing: -.1px; }
.avatar { width: 17px; height: 17px; border-radius: 50%; background: #f5f3f1; }
.c1 { margin-left: 30px; } .c2 { margin-left: 32px; } .c3 { margin-left: 32px; }

/* Ribbon tabs */
.tabs { height: 34px; flex: none; display: flex; font-size: 14px; letter-spacing: -.25px; line-height: 33px; padding-left: 22px; color: #3b3a39; }
.tabs span { height: 31px; white-space: nowrap; }
.t-file { width: 59px; }
.t-home { width: 38px; margin-right: 31px; }
.tabs .on { border-bottom: 3px solid #edc62f; font-weight: 600; color: #222; letter-spacing: -.6px; }
.t-ins { width: 67px; } .t-mod { width: 90px; } .t-view { width: 61px; }

/* Ribbon */
.ribbon { height: 92px; flex: none; display: flex; padding-top: 2px; border-bottom: 1px solid #dcdad8; background: #f3f2f1; }
.group { height: 88px; border-right: 1px solid #cbc9c7; display: flex; flex-direction: column; flex: none; }
.row { display: flex; height: 76px; flex: none; padding-top: 6px; }
.gl { text-align: center; font-size: 10.5px; line-height: 14px; letter-spacing: -.25px; color: #444; }
.rb { display: flex; flex-direction: column; align-items: center; flex: none; white-space: nowrap; line-height: 16px; letter-spacing: -.35px; color: #3b3a39; }
.ic { width: 32px; height: 32px; margin-bottom: 2px; }
.off { color: #b3b1af; }
.rb b { display: inline-block; width: 4px; height: 4px; border: solid currentColor; border-width: 0 1.5px 1.5px 0; transform: rotate(45deg); margin: 0 1px 3px 4px; }
.rb .solo { margin: 0; }
.g-clip { width: 161px; } .g-data { width: 345px; } .g-q { width: 117px; } .g-ins { width: 147px; } .g-calc { width: 115px; } .g-sens { width: 73px; } .g-share { width: 60px; }
.g-data .row { padding-left: 4px; } .g-q .row { padding-left: 9px; } .g-ins .row { padding-left: 8px; } .g-calc .row { padding-left: 7px; }
.b-paste { width: 44px; margin-left: 6px; }
.b39 { width: 39px; } .b40 { width: 40px; } .b42 { width: 42px; } .b46 { width: 46px; } .b48 { width: 48px; } .b49 { width: 49px; } .b50 { width: 50px; } .b53 { width: 53px; } .b54 { width: 54px; } .b57 { width: 57px; } .b59 { width: 59px; } .b72 { width: 72px; }
.mini { padding-left: 2px; height: 62px; margin-top: -5px; }
.mini div { display: flex; align-items: center; gap: 4px; height: 24px; white-space: nowrap; }
.mini div span { letter-spacing: -.4px; }
.collapse { margin-left: auto; align-self: flex-end; padding: 0 4px 4px 0; }
.k { fill: none; stroke: #3f3d3b; stroke-width: 1.2; }
.w { fill: #fff; } .w:not(.k) { stroke: #555; }
.gy { stroke: #777; }
.b { fill: #7cbcf5; stroke: #2b6cb0; } .g { fill: #c8c6c4; stroke: #777; } .bl { fill: none; stroke: #2b7cc4; stroke-width: 1.2; }
.b.k, .g.k { stroke: #444; }

/* Main area */
.main { height: 488px; flex: none; display: flex; }
.rail { width: 42px; background: #f3f2f1; border-right: 1px solid #e4e2e0; }
.r { height: 40px; display: flex; align-items: center; justify-content: center; border-left: 3px solid transparent; padding-right: 2px; }
.r.on { border-color: #f2c811; }
.center { width: 876px; display: flex; flex-direction: column; }
.upper { height: 453px; display: flex; background: #fff; }
.stage { width: 843px; padding-left: 24px; }
.page { width: 795px; height: 448px; border: 2px dotted #555; border-top: 0; }
h1 { height: 51px; background: #d2e4f5; border: 1px solid #6f9ccb; border-top: 2px solid #2f6fae; text-align: center; font-weight: 700; font-size: 19px; line-height: 48px; color: #1f2326; letter-spacing: .25px; }
.cities { display: flex; gap: 1px; padding: 10px 15px 5px; height: 65px; box-shadow: 0 3px 6px rgba(0,0,0,.45); background: #fff; clip-path: inset(0 0 -12px 0); }
.cities span { flex: 1; border: 1px solid #b5b5b5; text-align: center; line-height: 49px; font-size: 16px; color: #2a2a2a; letter-spacing: -.2px; }
.cities .sel { background: #333; color: #fff; border-color: #333; }
.board { display: flex; padding: 8px 13px 0 13px; gap: 12px; }
.card { background: #fff; box-shadow: 5px 5px 7px rgba(0,0,0,.3), 0 0 3px rgba(0,0,0,.06); }
.dates { width: 128px; height: 302px; padding: 3px 0 0 13px; }
.dh { display: flex; align-items: center; justify-content: space-between; padding-right: 7px; height: 17px; margin-left: -5px; color: #222; font-weight: 600; font-size: 12px; }
.dates ul { letter-spacing: -.32px; font-size: 10px; color: #333; }
.dates li { height: 17.9px; display: flex; align-items: center; white-space: nowrap; }
.dates i { border: 3px solid transparent; border-left: 4px solid #555; border-right: 0; margin-right: 5px; }
.dates u { width: 10px; height: 10px; border: 1px solid #777; border-radius: 50%; margin-right: 5px; }
.dates .sel { background: #222; box-shadow: inset 0 0 0 1px #fff; }
.right { width: 623px; padding-top: 2px; }
.kpis { display: flex; justify-content: space-between; height: 93px; }
.kpi { width: 112px; height: 76px; display: flex; flex-direction: column; align-items: center; }
.kpi.vis { width: 113px; margin-top: -2px; height: 77px; } .kpi.pre { width: 115px; }
h3 { font-family: Roboto, sans-serif; font-size: 12.5px; color: #999; letter-spacing: .35px; line-height: 17px; white-space: nowrap; }
.kpi strong, .sun strong { font-family: Roboto, sans-serif; font-weight: 400; color: #222; font-size: 33px; line-height: 36px; letter-spacing: -.8px; -webkit-text-stroke: .35px #222; }
.summary { height: 72px; text-align: center; font: 28px/82px Roboto, sans-serif; letter-spacing: .8px; color: #222; -webkit-text-stroke: .25px #222; }
.suns { display: flex; padding: 16px 0 0 66px; gap: 39px; align-items: flex-start; }
.sun { width: 208px; height: 120px; text-align: center; }
.sun.set { width: 214px; height: 118px; margin-top: 2px; }
.sh { display: flex; gap: 9px; padding: 0 0 0 32px; height: 56px; }
.sh svg { margin-top: 8px; }
.set .sh { padding-left: 44px; gap: 5px; height: 55px; padding-top: 1px; }
.set .sh svg { margin-top: 8px; }
.filters { width: 33px; border-left: 1px solid #d5d3d1; display: flex; flex-direction: column; align-items: center; padding-top: 11px; gap: 17px; }
.fun { margin-left: 3px; }
.filters span { writing-mode: vertical-rl; font-weight: 600; font-size: 14px; color: #222; margin-top: -9px; margin-right: 3px; }
.pagetabs { height: 35px; display: flex; align-items: center; padding-left: 5px; gap: 17px; border-bottom: 1px solid #d6d4d2; }
.pt { height: 34px; line-height: 37px; width: 76px; text-align: center; letter-spacing: -.2px; font-size: 12px; margin-right: -17px; }
.pt.on { background: #fff; border-bottom: 4px solid #f2c811; font-weight: 600; color: #222; margin-left: -10px; border-left: 1px solid #c5c3c1; border-right: 1px solid #c5c3c1; letter-spacing: -.5px; }
.plus { width: 39px; height: 32px; background: #f2c811; display: flex; align-items: center; justify-content: center; margin-left: 17px; margin-left: 0; }

/* Side panes */
.viz, .fields { border-left: 1px solid #dddbd9; width: 181px; flex: none; }
.ph { display: flex; align-items: center; justify-content: space-between; height: 39px; padding: 0 8px; }
h2 { font-size: 15px; font-weight: 600; color: #252423; letter-spacing: -.1px; }
.bv { font-weight: 600; font-size: 12px; padding-left: 8px; height: 18px; line-height: 14px; letter-spacing: -.35px; }
.modes { display: flex; gap: 34px; padding: 1px 0 0 8px; }
.m { width: 31px; height: 31px; display: flex; align-items: center; justify-content: center; }
.m.on { background: #d2d0ce; }
.notch { margin-top: 4px; }
.icons { display: grid; grid-template-columns: repeat(6, 20px); gap: 8px; padding: 12px 0 0 9px; }
.icons svg { width: 20px; height: 20px; }
.n123 { font: 7.5px "Open Sans", sans-serif; text-anchor: middle; fill: #2b7cc4; }
.rpy { font: 700 16px "Open Sans", sans-serif; text-anchor: middle; fill: #2b7cb0; letter-spacing: -.5px; }
.wells { border-top: 1px solid #dddbd9; margin-top: 10px; height: 174px; padding: 8px 6px 0 4px; position: relative; overflow: hidden; letter-spacing: -.2px; }
.wl { padding-left: 8px; height: 21px; line-height: 16px; }
.well { background: #fff; border: 1px dashed #d4d2d0; height: 29px; line-height: 29px; padding-left: 10px; white-space: nowrap; }
.dt { font-weight: 600; margin-top: 9px; height: 21px; letter-spacing: -.3px; line-height: 19px; }
.tg { display: flex; justify-content: space-between; align-items: center; padding-left: 8px; height: 27px; }
.t2 { height: 26px; }
.tg em { font-style: normal; font-size: 9.5px; width: 32px; height: 16px; border-radius: 8px; display: flex; align-items: center; justify-content: space-between; padding: 0 4px; border: 1px solid #666; }
.tg em i { width: 8px; height: 8px; border-radius: 50%; background: #555; }
.tg .offt { background: #fff; }
.tg .ont { background: #555; color: #fff; } .tg .ont i { background: #fff; }
.w2 { margin-top: 5px; padding-left: 8px; height: 26px; line-height: 24px; }
.scroll { position: absolute; right: 0; top: 2px; width: 6px; height: 160px; border-radius: 3px; background: #cfcdcb; }
.search { margin: 6px 4px 0 4px; height: 27px; border: 1px solid #999; border-radius: 2px; background: #fff; display: flex; align-items: center; gap: 6px; padding-left: 7px; font-size: 13px; letter-spacing: -.1px; color: #555; }
.search span { padding-top: 1px; }
.tree { display: flex; align-items: center; gap: 5px; padding: 13px 0 0 10px; letter-spacing: -.4px; }

/* Status bar */
.status { height: 23px; flex: none; display: flex; justify-content: space-between; align-items: center; padding: 2px 22px 0 5px; border-bottom: 1px solid #999; color: #444; letter-spacing: -.2px; }
.zoom { display: flex; align-items: center; gap: 5px; }
.pct { margin-left: 12px; margin-right: 15px; }

/* Taskbar */
.taskbar { height: 49px; flex: none; display: flex; justify-content: space-between; color: #fff; background: linear-gradient(90deg, #1c212b 0, #1c232e 205px, #10224c 240px, #101f5e 400px, #111f63 600px, #1a1f45 690px, #121e4e 760px, #101c4c 880px, #1b2030 960px, #1b2129 1280px); }
.apps { display: flex; align-items: center; padding: 3px 0 0 443.5px; }
.tsearch { width: 100px; height: 32px; margin: 0 5px 0 13.5px; border-radius: 16px; background: rgba(60,70,110,.45); display: flex; align-items: center; justify-content: center; gap: 5px; letter-spacing: -.2px; }
.app { width: 39px; height: 42px; margin-right: 5px; display: flex; align-items: center; justify-content: center; position: relative; }
.app.run::after { content: ""; position: absolute; bottom: 1px; width: 6px; height: 3px; border-radius: 2px; background: #a0a3b5; }
.app.act { background: rgba(255,255,255,.09); border-radius: 4px; }
.app.act::after { content: ""; position: absolute; bottom: 1px; width: 16px; height: 3px; border-radius: 2px; background: #5fb8f5; }
.badge { position: absolute; right: 2px; top: 4px; width: 15px; height: 15px; border-radius: 50%; background: #4cb8f5; color: #123; font-size: 10px; line-height: 15px; text-align: center; font-weight: 400; }
.tray { display: flex; align-items: center; padding-right: 19px; white-space: nowrap; }
.od { margin-left: 10px; } .up { margin-left: 8px; }
.lang { width: 30px; margin-left: 10px; text-align: center; line-height: 16px; letter-spacing: -.4px; }
.wifi { margin-left: 15px; } .vol { margin-left: 7px; } .bat { margin-left: 8px; }
.clock { text-align: right; width: 62px; margin-left: 12px; line-height: 15px; letter-spacing: -.4px; }
.notif { width: 16px; height: 16px; margin-left: 7px; border-radius: 50%; background: #4cb8f5; color: #123; font-size: 10px; font-weight: 400; text-align: center; line-height: 16px; }
```
